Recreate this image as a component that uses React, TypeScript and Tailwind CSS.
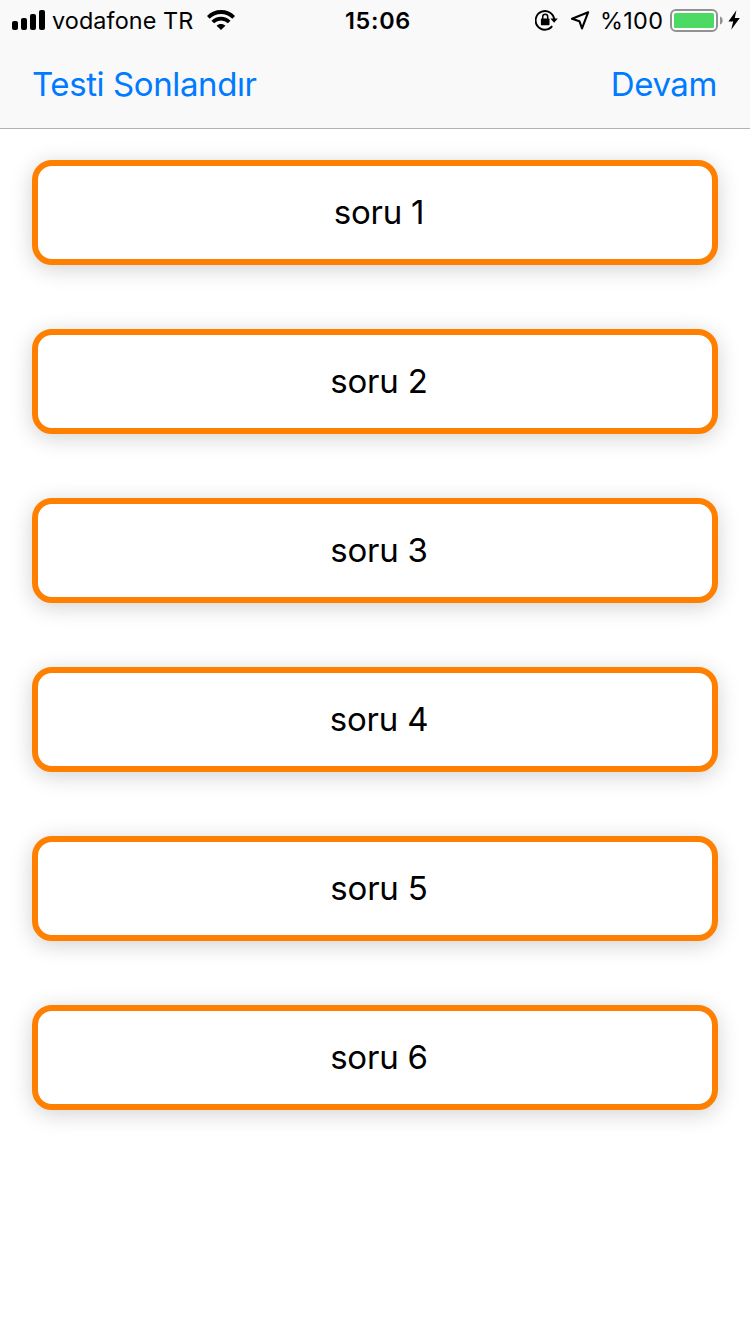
const questions = ["soru 1", "soru 2", "soru 3", "soru 4", "soru 5", "soru 6"];

function SignalIcon() {
  return (
    <svg className="h-5 w-[33px]" viewBox="0 0 33 20">
      <rect x="0" y="11" width="6" height="9" rx="2" />
      <rect x="9" y="8" width="6" height="12" rx="2" />
      <rect x="18" y="4" width="6" height="16" rx="2" />
      <rect x="27" y="0" width="6" height="20" rx="2" />
    </svg>
  );
}

function WifiIcon() {
  return (
    <svg className="h-5 w-7" viewBox="0 0 28 20">
      <g fill="none" stroke="#000" strokeWidth="3.8">
        <path d="M1.3 7.3C8.4 .2 19.6 .2 26.7 7.3" />
        <path d="M5.8 12C10.4 7.5 17.6 7.5 22.2 12" />
      </g>
      <path d="M14 20L9.6 15.8C11.9 13.3 16.1 13.3 18.4 15.8Z" />
    </svg>
  );
}

function RotationLockIcon() {
  return (
    <svg className="h-[22px] w-6" viewBox="0 0 24 22">
      <path d="M17.2 17.2A9.3 9.3 0 1 1 19.2 10.6" fill="none" stroke="#000" strokeWidth="1.9" />
      <path d="M15.4 9.6H22.8L19.1 13.8Z" />
      <rect x="5.9" y="9.6" width="8.6" height="6.6" rx="0.8" />
      <path d="M7.7 10V7.8a2.5 2.5 0 0 1 5 0V10" fill="none" stroke="#000" strokeWidth="1.5" />
    </svg>
  );
}

function LocationIcon() {
  return (
    <svg className="h-5 w-5" viewBox="0 0 20 20">
      <path d="M18.2 2.2L2 8.8L9.4 11.2L12 18.4Z" fill="none" stroke="#000" strokeWidth="2.1" strokeLinejoin="round" />
    </svg>
  );
}

function BatteryIcon() {
  return (
    <svg className="h-6 w-[54px]" viewBox="0 0 54 24">
      <rect x="1" y="2" width="46" height="21" rx="5" fill="#fff" stroke="#929292" strokeWidth="2" />
      <rect x="4" y="5" width="40" height="15" rx="1.5" fill="#4cd964" />
      <path d="M50 8.5C53.6 9.6 53.6 15.4 50 16.5Z" fill="#929292" />
    </svg>
  );
}

function BoltIcon() {
  return (
    <svg className="h-5 w-3" viewBox="0 0 12 20">
      <path d="M8.4 .2L.4 11.6H5.2L3.2 19.8L11.8 8H6.8Z" />
    </svg>
  );
}

export default function App() {
  return (
    <div className="flex min-h-screen w-[750px] flex-col bg-white font-['Inter','Liberation_Sans',sans-serif] text-black">
      <header className="flex h-[129px] flex-col border-b border-[#b2b2b2] bg-[#f9f9f9]">
        <div className="grid h-10 grid-cols-3 items-center text-[23.4px] leading-8">
          <div className="flex items-center pl-3">
            <SignalIcon />
            <span className="ml-[7px] w-[142px] whitespace-nowrap pt-0.5 tracking-[0.1px]">vodafone TR</span>
            <span className="ml-[13px]">
              <WifiIcon />
            </span>
          </div>
          <span className="pl-[6px] pt-0.5 text-center font-semibold tracking-[0.7px]">15:06</span>
          <div className="flex items-center justify-end pr-[10px]">
            <RotationLockIcon />
            <span className="ml-[11px]">
              <LocationIcon />
            </span>
            <span className="ml-[10px] w-[63px] whitespace-nowrap pt-0.5 tracking-[0.3px]">%100</span>
            <span className="ml-[7px]">
              <BatteryIcon />
            </span>
            <span className="ml-1">
              <BoltIcon />
            </span>
          </div>
        </div>
        <nav className="flex flex-1 items-center justify-between pt-0.5 pr-[33px] pl-8 text-[33px] tracking-[-0.4px] text-[#007aff]">
          <button className="whitespace-nowrap">Testi Sonlandır</button>
          <button className="whitespace-nowrap">Devam</button>
        </nav>
      </header>
      <main className="flex flex-col gap-16 px-8 pt-[31px]">
        {questions.map((question) => (
          <button
            key={question}
            className="flex h-[105px] items-center justify-center rounded-[20px] border-6 border-[#ff8000] bg-white pt-px pl-2 text-[33px] tracking-[-0.2px] shadow-[0_4px_22px_rgba(0,0,0,0.18)]"
          >
            {question}
          </button>
        ))}
      </main>
    </div>
  );
}
